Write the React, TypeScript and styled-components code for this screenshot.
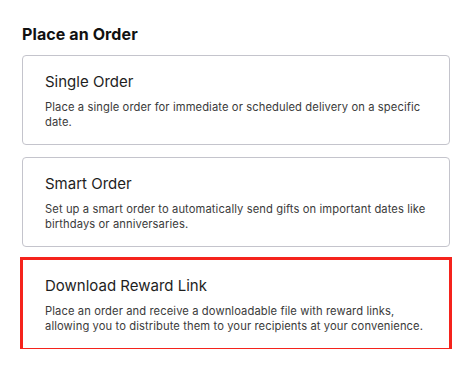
import styled, { createGlobalStyle } from 'styled-components'

const GlobalStyle = createGlobalStyle`
  html, body {
    margin: 0;
    padding: 0;
    background: #ffffff;
  }
  body {
    font-family: Inter, "Noto Sans", sans-serif;
    -webkit-font-smoothing: antialiased;
  }
`

const Page = styled.div`
  width: 474px;
  padding: 25px 24px 0 22px;
  box-sizing: border-box;
`

const Heading = styled.h2`
  margin: 0 0 12px;
  font-size: 16px;
  line-height: 18px;
  font-weight: 700;
  color: #111111;
  letter-spacing: 0.1px;
`

const OptionList = styled.div`
  display: flex;
  flex-direction: column;
  gap: 12px;
`

const OptionCard = styled.div<{ $selected?: boolean }>`
  box-sizing: border-box;
  height: 90px;
  padding: 16px 22px;
  border: 1px solid #c4c4cc;
  border-radius: 4px;
  background: #ffffff;
  cursor: pointer;
  outline: ${p => (p.$selected ? '3px solid #f5231c' : 'none')};
  outline-offset: -1px;
  ${p => p.$selected && 'border-radius: 0;'}
`

const OptionTitle = styled.div`
  font-size: 15px;
  line-height: 20px;
  font-weight: 400;
  color: #1e1e1e;
  margin-bottom: 8px;
`

const OptionText = styled.p`
  margin: 0;
  font-size: 11.2px;
  line-height: 15px;
  letter-spacing: 0.1px;
  color: #3b3b3b;
`

const options = [
  {
    title: 'Single Order',
    text: 'Place a single order for immediate or scheduled delivery on a specific date.',
  },
  {
    title: 'Smart Order',
    text: 'Set up a smart order to automatically send gifts on important dates like birthdays or anniversaries.',
  },
  {
    title: 'Download Reward Link',
    text: 'Place an order and receive a downloadable file with reward links, allowing you to distribute them to your recipients at your convenience.',
    selected: true,
  },
]

const App = () => {
  return (
    <>
      <GlobalStyle />
      <Page>
        <Heading>Place an Order</Heading>
        <OptionList>
          {options.map(o => (
            <OptionCard key={o.title} $selected={o.selected}>
              <OptionTitle>{o.title}</OptionTitle>
              <OptionText>{o.text}</OptionText>
            </OptionCard>
          ))}
        </OptionList>
      </Page>
    </>
  )
}

export default App
